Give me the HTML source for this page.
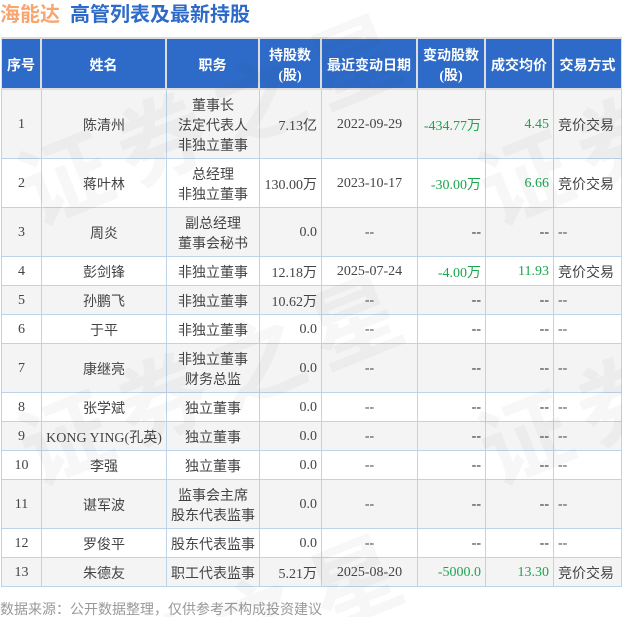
<!DOCTYPE html>
<html lang="zh"><head><meta charset="utf-8"><style>
html,body{margin:0;padding:0;width:622px;height:617px;overflow:hidden;background:#fff}
body{position:relative;font-family:"Liberation Serif","Noto Sans CJK SC",sans-serif;font-size:14px;color:#444}
#w{position:absolute;left:0;top:0;width:622px;height:617px;overflow:hidden;filter:blur(.3px)}
.t{position:absolute;top:2px;font:bold 20px/26px "Liberation Serif","Noto Sans CJK SC",sans-serif;white-space:nowrap}
table{position:absolute;left:1px;top:37px;border-collapse:separate;border-spacing:0;table-layout:fixed;width:621px}
td,th{padding:2px 4px 0;border-right:1px solid #bcd3e8;border-bottom:1px solid #bcd3e8;box-sizing:border-box;text-align:center;vertical-align:middle;white-space:nowrap}
td:first-child{border-left:1px solid #bcd3e8}
th{background:#2e6bc9;color:#fff;font-weight:bold;border-top:2px solid #ddd;border-bottom:2px solid #ddd;border-right:2px solid #ddd;height:53px;padding:2px 0 0}
th:first-child{border-left:1px solid #ddd}
th:last-child{border-right:1px solid #ddd}
tr:nth-child(odd) td{background:#f4f4f4}
.r{text-align:right}.l{text-align:left}.g{color:#1aa64e}.d{color:#222}
.f{position:absolute;left:0;top:601px;color:#999;white-space:nowrap;line-height:20px}
svg{position:absolute;left:0;top:0;pointer-events:none}
</style></head><body><div id="w">
<div class="t" style="left:0;color:#f9a56f">海能达</div>
<div class="t" style="left:70px;color:#2e6bc9">高管列表及最新持股</div>
<table>
<colgroup><col style="width:41px"><col style="width:125px"><col style="width:93px"><col style="width:62px"><col style="width:96px"><col style="width:68px"><col style="width:68px"><col style="width:68px"></colgroup>
<thead><tr><th>序号</th><th>姓名</th><th>职务</th><th>持股数<br>(股)</th><th>最近变动日期</th><th>变动股数<br>(股)</th><th>成交均价</th><th>交易方式</th></tr></thead>
<tbody>
<tr style="height:69px"><td>1</td><td>陈清州</td><td>董事长<br>法定代表人<br>非独立董事</td><td class="r">7.13亿</td><td>2022-09-29</td><td class="r g">-434.77万</td><td class="r g">4.45</td><td class="l">竞价交易</td></tr>
<tr style="height:49px"><td>2</td><td>蒋叶林</td><td>总经理<br>非独立董事</td><td class="r">130.00万</td><td>2023-10-17</td><td class="r g">-30.00万</td><td class="r g">6.66</td><td class="l">竞价交易</td></tr>
<tr style="height:49px"><td>3</td><td>周炎</td><td>副总经理<br>董事会秘书</td><td class="r">0.0</td><td>--</td><td class="r d">--</td><td class="r d">--</td><td class="l">--</td></tr>
<tr style="height:29px"><td>4</td><td>彭剑锋</td><td>非独立董事</td><td class="r">12.18万</td><td>2025-07-24</td><td class="r g">-4.00万</td><td class="r g">11.93</td><td class="l">竞价交易</td></tr>
<tr style="height:29px"><td>5</td><td>孙鹏飞</td><td>非独立董事</td><td class="r">10.62万</td><td>--</td><td class="r d">--</td><td class="r d">--</td><td class="l">--</td></tr>
<tr style="height:29px"><td>6</td><td>于平</td><td>非独立董事</td><td class="r">0.0</td><td>--</td><td class="r d">--</td><td class="r d">--</td><td class="l">--</td></tr>
<tr style="height:49px"><td>7</td><td>康继亮</td><td>非独立董事<br>财务总监</td><td class="r">0.0</td><td>--</td><td class="r d">--</td><td class="r d">--</td><td class="l">--</td></tr>
<tr style="height:29px"><td>8</td><td>张学斌</td><td>独立董事</td><td class="r">0.0</td><td>--</td><td class="r d">--</td><td class="r d">--</td><td class="l">--</td></tr>
<tr style="height:29px"><td>9</td><td>KONG YING(孔英)</td><td>独立董事</td><td class="r">0.0</td><td>--</td><td class="r d">--</td><td class="r d">--</td><td class="l">--</td></tr>
<tr style="height:29px"><td>10</td><td>李强</td><td>独立董事</td><td class="r">0.0</td><td>--</td><td class="r d">--</td><td class="r d">--</td><td class="l">--</td></tr>
<tr style="height:49px"><td>11</td><td>谌军波</td><td>监事会主席<br>股东代表监事</td><td class="r">0.0</td><td>--</td><td class="r d">--</td><td class="r d">--</td><td class="l">--</td></tr>
<tr style="height:29px"><td>12</td><td>罗俊平</td><td>股东代表监事</td><td class="r">0.0</td><td>--</td><td class="r d">--</td><td class="r d">--</td><td class="l">--</td></tr>
<tr style="height:29px"><td>13</td><td>朱德友</td><td>职工代表监事</td><td class="r">5.21万</td><td>2025-08-20</td><td class="r g">-5000.0</td><td class="r g">13.30</td><td class="l">竞价交易</td></tr>
</tbody></table>
<div class="f">数据来源：公开数据整理，仅供参考不构成投资建议</div>
<svg width="622" height="617">
<defs><pattern id="p" patternUnits="userSpaceOnUse" x="0" y="0" width="460" height="260">
<text transform="translate(36,226) rotate(-22)" font-family="'Noto Sans CJK SC',sans-serif" font-weight="bold" font-size="90" letter-spacing="14" fill="#000" fill-opacity=".03">证券之星</text>
</pattern></defs>
<rect width="622" height="617" fill="url(#p)"/>
</svg>
</div></body></html>
